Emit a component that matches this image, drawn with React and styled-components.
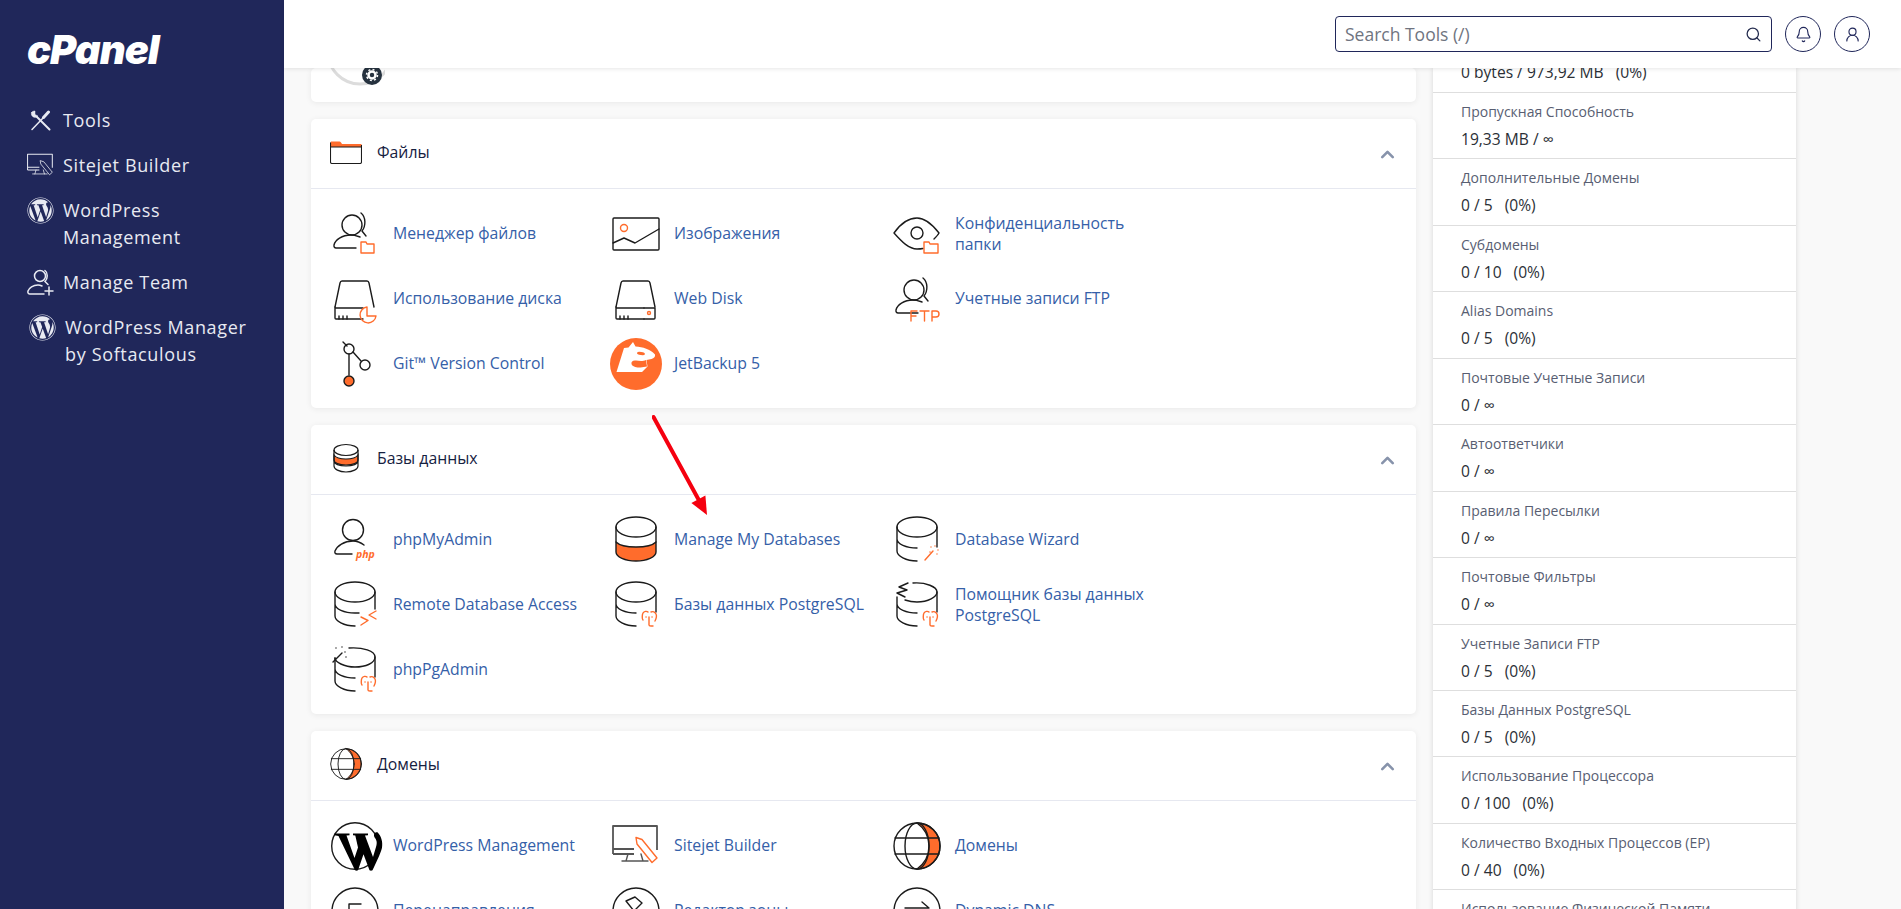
import React from "react";
import styled, { createGlobalStyle } from "styled-components";
import { FaWordpress } from "react-icons/fa";
import { Bell, ChevronUp, Search, UserRound } from "lucide-react";

const ORANGE = "#ff6c2c";
const INK = "#1b1b1b";

const GlobalStyle = createGlobalStyle`
  html, body {
    margin: 0;
    height: 100%;
    overflow: hidden;
    font-family: "Open Sans", "Liberation Sans", sans-serif;
    background: #f9f9f9;
  }
  * { box-sizing: border-box; }
`;

function Svg({ size = 48, children }) {
    return (
        <svg width={size} height={size} viewBox="0 0 48 48" fill="none" stroke={INK} strokeWidth="1.4" strokeLinecap="round" strokeLinejoin="round" style={{ overflow: "visible", flexShrink: 0 }}>
            {children}
        </svg>
    );
}

function Person() {
    return (
        <>
            <circle cx="21" cy="15" r="10" />
            <path d="M30 3c5 4 5 13 1 18l4 5" />
            <path d="M29 27c-3-1-5-2-9-2-9 0-16 5-17 10-.3 2 .7 3 2 3h20" />
        </>
    );
}

function FileManagerIcon() {
    return (
        <Svg>
            <Person />
            <path d="M30 43V32h5l1 2h7v9z" stroke={ORANGE} />
        </Svg>
    );
}

function ImagesIcon() {
    return (
        <Svg>
            <rect x="1" y="8" width="46" height="32" rx="1" />
            <circle cx="12" cy="18" r="3.5" stroke={ORANGE} />
            <path d="M1 33l11-5 11 5 24-14" />
        </Svg>
    );
}

function EyeIcon() {
    return (
        <Svg>
            <path d="M1 23C8 13 16 8 24 8s15 6 22 15c-1 2-3 4-5 6M30 38.500c-2 .4-4 .5-6 .5-8 0-15-7-23-16" />
            <circle cx="24" cy="23" r="6" />
            <path d="M31 43V32h5l1 2h8v9z" stroke={ORANGE} />
        </Svg>
    );
}

function DiskShape() {
    return (
        <>
            <path d="M4 32 9 8c.3-1.300 1-2 2-2h25c1 0 1.700.7 2 2l5 24" />
            <path d="M4 32v11c0 .5.500 1 1 1h27M4 33h28" />
            <path d="M8 44v-3M12 44v-3M16 44v-3" />
        </>
    );
}

function DiskUsageIcon() {
    return (
        <Svg>
            <DiskShape />
            <path d="M36 32a8 8 0 1 0 9 9h-9z" stroke={ORANGE} />
        </Svg>
    );
}

function WebDiskIcon() {
    return (
        <Svg>
            <DiskShape />
            <path d="M32 33h11v10c0 .5-.5 1-1 1H32" />
            <circle cx="37" cy="38" r="1.500" stroke={ORANGE} />
        </Svg>
    );
}

function FtpIcon() {
    return (
        <Svg>
            <Person />
            <path d="M18 46V36h6M18 41h5M27 36h9M31.500 36v10M39 46V36h4a3 3 0 0 1 0 6h-4" stroke={ORANGE} />
        </Svg>
    );
}

function GitIcon() {
    return (
        <Svg>
            <path d="M12 2l4 4" />
            <circle cx="18" cy="9" r="5" />
            <circle cx="34" cy="25" r="5" />
            <path d="M18 14v21M22 12l8 9" />
            <circle cx="18" cy="41" r="5" fill={ORANGE} />
        </Svg>
    );
}

function JetBackupIcon() {
    return (
        <Svg>
            <circle cx="24" cy="24" r="26" fill={ORANGE} stroke="none" />
            <path d="M4.500 32 12 8l4.500-.5L21 2l2.500 4.500C31 7 38 9 43 14.500c.5 2-1 4-3.500 4.500l-5 1 1 6.500-5.500 5.500z" fill="#fff" stroke="none" />
            <ellipse cx="29" cy="13.500" rx="4" ry="1.600" fill={ORANGE} stroke="none" transform="rotate(8 29 13.500)" />
            <path d="M34 20c-3 1.500-7 1-10 .5-3-.5-5 1-4.500 3.500.6 2.500 5 4 9 3.500l6.500-1z" fill={ORANGE} stroke="none" />
        </Svg>
    );
}

function DbShape() {
    return (
        <>
            <ellipse cx="24" cy="11" rx="20" ry="10" />
            <path d="M4 11v12c0 5 9 9 20 9M44 11v20M4 23v12c0 5 9 10 20 10" />
        </>
    );
}

function PgMark() {
    return (
        <path d="M31 39c-1-1-1-5 0-7s4-2 5-1M39 31c2-1 4 0 5 2s0 5-1 7M37 36v8c0 1 1 1 2 1h2M34 36h.1M40 36h.1" stroke={ORANGE} />
    );
}

function PhpMyAdminIcon() {
    return (
        <Svg>
            <circle cx="22" cy="14" r="10.500" />
            <path d="M33 29c-4-3-7-4-11-4-9 0-16 5-18 10-.6 2 .4 3 2 3h15" />
            <text x="25" y="42" fill={ORANGE} stroke="none" fontSize="10.500" fontWeight="700" fontStyle="italic" fontFamily="Open Sans">php</text>
        </Svg>
    );
}

function ManageDbIcon() {
    return (
        <Svg>
            <path d="M4 26v10c0 5 9 9 20 9s20-4 20-9V26c-4 4-12 5-20 5S8 30 4 26z" fill={ORANGE} />
            <ellipse cx="24" cy="11" rx="20" ry="10" />
            <path d="M4 11v15M44 11v15" />
        </Svg>
    );
}

function WizardDbIcon() {
    return (
        <Svg>
            <DbShape />
            <path d="M32 44l8-9M42 30v.1M38 31v.1M45 34v.1M44 38v.1M37 36v.1" stroke={ORANGE} />
        </Svg>
    );
}

function RemoteDbIcon() {
    return (
        <Svg>
            <path d="M4 11v12c0 5 9 9 20 9h4M44 11v17M4 23v12c0 5 9 10 20 10" />
            <ellipse cx="24" cy="11" rx="20" ry="10" />
            <path d="M30 36l7 3.500-7 4.500M45 30l-7 4 7 4" stroke={ORANGE} />
        </Svg>
    );
}

function PgDbIcon() {
    return (
        <Svg>
            <DbShape />
            <PgMark />
        </Svg>
    );
}

function PgAssistantIcon() {
    return (
        <Svg>
            <path d="M15 2l-9 4 8 3-10 3 8 4M20 2c13-1 24 4 24 9s-9 10-20 10c-6 0-9-1-12-2" />
            <path d="M4 16v7c0 5 9 9 20 9M44 11v20M4 23v12c0 5 9 10 20 10" />
            <PgMark />
        </Svg>
    );
}

function PgAdminIcon() {
    return (
        <Svg>
            <path d="M18 2c14-1 26 3 26 9s-9 10-20 10S4 16 4 12" />
            <path d="M4 12v11c0 5 9 9 20 9M44 11v20M4 23v12c0 5 9 10 20 10" />
            <path d="M2 16l9-9M5 2v.1M11 1v.1M14 6v.1M15 11v.1" />
            <PgMark />
        </Svg>
    );
}

function GlobeIcon({ size }) {
    return (
        <Svg size={size}>
            <path d="M24 1c13 0 23 10 23 23S37 47 24 47c7-5 12-13 12-23S31 6 24 1z" fill={ORANGE} />
            <circle cx="24" cy="24" r="23" />
            <ellipse cx="24" cy="24" rx="12" ry="23" />
            <path d="M2 16h44M2 32h44" />
        </Svg>
    );
}

function WordPressMark() {
    return (
        <Svg>
            <circle cx="24" cy="24" r="23.300" />
            <path d="M3.500 11.500h15v1.700l-3 .4 8 22.400 3.500-10.500-2.700-11.900-2.300-.4v-1.700h15v1.700l-3 .4 8 21.500 3-10c1.500-4.500.5-7-1-9-1-1.500-1.500-3-.5-4.500.6-1 1.800-1.500 3-1.300 3.500 3.500 5.500 9 4.500 15.500-1 4.500-4 11-9.500 22.500-1 .5-2 .5-3 0l-6-16-5.500 16c-1 .5-2 .5-3 0L7.500 14l-4-.8z" fill="#000" stroke="none" />
        </Svg>
    );
}

function SitejetIcon({ size, accent = ORANGE, line = "#555" }) {
    return (
        <Svg size={size}>
            <path d="M1 32V4h44v24M1 32h21M1 27h21" stroke={line} strokeWidth="1.800" strokeLinecap="butt" />
            <path d="M16 32l-2 7M29 32l2 7M10 39h26" stroke={line} />
            <path d="M24 15.500l6 2L45 36l-5 4.500L25 22z" stroke={accent} />
        </Svg>
    );
}

function RedirectIcon() {
    return (
        <Svg>
            <circle cx="24" cy="24" r="23" />
            <path d="M18 22V17h12" />
        </Svg>
    );
}

function ZoneIcon() {
    return (
        <Svg>
            <circle cx="24" cy="24" r="23" />
            <path d="M14 14l9-4 7 6-8 8z" />
        </Svg>
    );
}

function DnsIcon() {
    return (
        <Svg>
            <circle cx="24" cy="24" r="23" />
            <path d="M12 21h24l-7-6" />
        </Svg>
    );
}

function FolderIcon() {
    return (
        <svg width="32" height="23" viewBox="0 0 32 23" fill="none" stroke={INK} strokeWidth="1.100">
            <path d="M.5 6V1.500c0-.5.500-1 1-1h8c.5 0 1 .3 1.500 1L12 3h19.500v3z" fill={ORANGE} stroke="none" />
            <path d="M.5 1.500V21c0 1 .5 1.500 1.500 1.500h28c1 0 1.500-.5 1.500-1.500V4M.5 6h31" />
        </svg>
    );
}

function StackIcon() {
    return (
        <svg width="32" height="32" viewBox="0 0 32 32" fill="none" stroke={INK} strokeWidth="1.200">
            <path d="M4 13v5c0 3 5 5 12 5s12-2 12-5v-5c-2 3-6 4-12 4S6 16 4 13z" fill={ORANGE} />
            <ellipse cx="16" cy="8" rx="12" ry="5.500" />
            <path d="M4 8v16c0 3 5 6 12 6s12-3 12-6V8M4 19c0 3 5 5 12 5s12-2 12-5" />
        </svg>
    );
}

function GaugeIcon() {
    return (
        <svg width="60" height="60" viewBox="0 0 60 60" fill="none">
            <circle cx="35" cy="26" r="32" stroke="#dcdcdc" strokeWidth="3" />
            <circle cx="47" cy="49" r="10" fill="#26323f" />
            <circle cx="47" cy="49" r="3.500" stroke="#fff" strokeWidth="2.500" />
            <circle cx="47" cy="49" r="5.500" stroke="#fff" strokeWidth="1.500" strokeDasharray="2 2.300" />
        </svg>
    );
}

function ToolsIcon() {
    return (
        <svg width="21" height="21" viewBox="0 0 21 21" fill="none" stroke="#e8eaf2" strokeWidth="1.500" strokeLinecap="round">
            <path d="M2 19.500L13 8" />
            <path d="M13.500 7.500L18.500 2" strokeWidth="3" />
            <path d="M7 7l12.500 12.500" strokeWidth="2" />
            <path d="M1.500 2.500c-1 3 2 6 5.500 4.500L8 6 5 4.500 5 1C3.500 1 2 1.500 1.500 2.500z" fill="#e8eaf2" strokeWidth="0.500" />
        </svg>
    );
}

function TeamIcon() {
    return (
        <svg width="27" height="27" viewBox="0 0 27 27" fill="none" stroke="#e8eaf2" strokeWidth="1.500" strokeLinecap="round">
            <circle cx="13" cy="7" r="5.500" />
            <path d="M18 1.500c3 2 3 8 0 11l3 3M15 17c-1-.5-2-1-4-1-5 0-9 3-10 6-.3 1.500 0 3 1.500 3H17M22 18v8M18 22h8" />
        </svg>
    );
}

const sideItems = [
    { icon: <ToolsIcon />, label: "Tools" },
    { icon: <SitejetIcon size={27} accent="#e8eaf2" line="#e8eaf2" />, label: "Sitejet Builder" },
    { icon: <FaWordpress size={27} />, label: "WordPress Management" },
    { icon: <TeamIcon />, label: "Manage Team" },
    { icon: <FaWordpress size={27} />, label: "WordPress Manager by Softaculous", shifted: true },
];

const sections = [
    {
        title: "Файлы",
        icon: <FolderIcon />,
        items: [
            [<FileManagerIcon />, "Менеджер файлов"],
            [<ImagesIcon />, "Изображения"],
            [<EyeIcon />, "Конфиденциальность папки"],
            [<DiskUsageIcon />, "Использование диска"],
            [<WebDiskIcon />, "Web Disk"],
            [<FtpIcon />, "Учетные записи FTP"],
            [<GitIcon />, "Git™ Version Control"],
            [<JetBackupIcon />, "JetBackup 5"],
        ],
    },
    {
        title: "Базы данных",
        icon: <StackIcon />,
        items: [
            [<PhpMyAdminIcon />, "phpMyAdmin"],
            [<ManageDbIcon />, "Manage My Databases"],
            [<WizardDbIcon />, "Database Wizard"],
            [<RemoteDbIcon />, "Remote Database Access"],
            [<PgDbIcon />, "Базы данных PostgreSQL"],
            [<PgAssistantIcon />, "Помощник базы данных PostgreSQL"],
            [<PgAdminIcon />, "phpPgAdmin"],
        ],
    },
    {
        title: "Домены",
        icon: <GlobeIcon size={32} />,
        items: [
            [<WordPressMark />, "WordPress Management"],
            [<SitejetIcon />, "Sitejet Builder"],
            [<GlobeIcon />, "Домены"],
            [<RedirectIcon />, "Перенаправления"],
            [<ZoneIcon />, "Редактор зоны"],
            [<DnsIcon />, "Dynamic DNS"],
        ],
    },
];

const stats = [
    ["Пропускная Способность", "19,33 MB / ∞"],
    ["Дополнительные Домены", "0 / 5", "(0%)"],
    ["Субдомены", "0 / 10", "(0%)"],
    ["Alias Domains", "0 / 5", "(0%)"],
    ["Почтовые Учетные Записи", "0 / ∞"],
    ["Автоответчики", "0 / ∞"],
    ["Правила Пересылки", "0 / ∞"],
    ["Почтовые Фильтры", "0 / ∞"],
    ["Учетные Записи FTP", "0 / 5", "(0%)"],
    ["Базы Данных PostgreSQL", "0 / 5", "(0%)"],
    ["Использование Процессора", "0 / 100", "(0%)"],
    ["Количество Входных Процессов (EP)", "0 / 40", "(0%)"],
    ["Использование Физической Памяти", "0 / 1 GB", "(0%)"],
];

export default function App() {
    return (
        <Page>
            <GlobalStyle />
            <Sidebar>
                <Logo>cPanel</Logo>
                <SideList>
                    {sideItems.map((item) => (
                        <SideItem key={item.label} $shifted={item.shifted}>
                            <SideIcon>{item.icon}</SideIcon>
                            <span>{item.label}</span>
                        </SideItem>
                    ))}
                </SideList>
            </Sidebar>
            <Main>
                <Topbar>
                    <SearchBox>
                        <SearchText>Search Tools (/)</SearchText>
                        <Search size={17} color="#222a4d" strokeWidth={1.8} />
                    </SearchBox>
                    <RoundButton><Bell size={17} strokeWidth={1.6} /></RoundButton>
                    <RoundButton><UserRound size={17} strokeWidth={1.6} /></RoundButton>
                </Topbar>
                <Content>
                    <Column>
                        <StubCard><GaugeIcon /></StubCard>
                        {sections.map((section) => (
                            <Card key={section.title}>
                                <CardHead>
                                    <HeadIcon>{section.icon}</HeadIcon>
                                    <CardTitle>{section.title}</CardTitle>
                                    <Chevron><ChevronUp size={21} strokeWidth={3} /></Chevron>
                                </CardHead>
                                <ToolGrid>
                                    {section.items.map(([icon, label]) => (
                                        <Tool key={label}>
                                            <ToolIcon>{icon}</ToolIcon>
                                            <ToolLabel>{label}</ToolLabel>
                                        </Tool>
                                    ))}
                                </ToolGrid>
                            </Card>
                        ))}
                    </Column>
                    <StatsPanel>
                        <StatStub>
                            <StatValue>0 bytes / 973,92 MB<Percent>(0%)</Percent></StatValue>
                        </StatStub>
                        {stats.map(([label, value, percent]) => (
                            <StatRow key={label}>
                                <StatLabel>{label}</StatLabel>
                                <StatValue>{value}{percent && <Percent>{percent}</Percent>}</StatValue>
                            </StatRow>
                        ))}
                    </StatsPanel>
                </Content>
            </Main>
            <Annotation width="70" height="110" viewBox="0 0 70 110">
                <path d="M1.500 2L46.400 84.200" stroke="#f5000f" strokeWidth="4" strokeLinecap="round" />
                <path d="M55 100L39.400 88L53.400 80.400z" fill="#f5000f" />
            </Annotation>
        </Page>
    );
}

const Page = styled.div`
  display: flex;
  height: 909px;
  overflow: hidden;
  position: relative;
`;

const Sidebar = styled.aside`
  width: 284px;
  flex-shrink: 0;
  background: #20275a;
  padding: 29px 27px 0;
  color: #e8eaf2;
`;

const Logo = styled.div`
  font-family: "Inter", "Open Sans", sans-serif;
  font-weight: 900;
  font-style: italic;
  font-size: 40px;
  line-height: 42px;
  letter-spacing: -1px;
  color: #fff;
`;

const SideList = styled.div`
  display: flex;
  flex-direction: column;
  gap: 18px;
  margin-top: 36px;
`;

const SideItem = styled.div`
  display: flex;
  gap: 9px;
  font-size: 18px;
  line-height: 27px;
  letter-spacing: 0.65px;
  padding-left: ${(props) => (props.$shifted ? "2px" : "0")};
`;

const SideIcon = styled.div`
  width: 27px;
  height: 27px;
  flex-shrink: 0;
  display: flex;
  align-items: center;
  justify-content: center;
`;

const Main = styled.div`
  flex: 1;
  min-width: 0;
  display: flex;
  flex-direction: column;
`;

const Topbar = styled.header`
  height: 68px;
  flex-shrink: 0;
  background: #fff;
  box-shadow: 0 1px 4px rgba(0, 0, 0, 0.1);
  display: flex;
  align-items: center;
  justify-content: flex-end;
  gap: 13px;
  padding-right: 31px;
  position: relative;
  z-index: 2;
`;

const SearchBox = styled.div`
  width: 437px;
  height: 36px;
  border: 1px solid #20275a;
  border-radius: 4px;
  display: flex;
  align-items: center;
  justify-content: space-between;
  padding: 0 9px;
`;

const SearchText = styled.span`
  font-size: 17.500px;
  color: #6f7480;
`;

const RoundButton = styled.div`
  width: 36px;
  height: 36px;
  border: 1px solid #20275a;
  border-radius: 50%;
  display: flex;
  align-items: center;
  justify-content: center;
  color: #20275a;
`;

const Content = styled.div`
  flex: 1;
  min-height: 0;
  overflow: hidden;
  display: flex;
  align-items: flex-start;
  gap: 17px;
  padding-left: 27px;
`;

const Column = styled.div`
  width: 1105px;
  flex-shrink: 0;
  display: flex;
  flex-direction: column;
  gap: 17px;
`;

const Card = styled.section`
  background: #fff;
  border-radius: 5px;
  box-shadow: 0 1px 6px rgba(0, 0, 0, 0.07);
`;

const StubCard = styled(Card)`
  height: 34px;
  display: flex;
  align-items: flex-end;
  padding: 0 0 16px 14px;
`;

const CardHead = styled.div`
  height: 70px;
  display: flex;
  align-items: center;
  padding: 0 18px 3px 19px;
  border-bottom: 1px solid #e6e8f0;
`;

const HeadIcon = styled.div`
  width: 32px;
  height: 32px;
  display: flex;
  align-items: center;
  justify-content: center;
`;

const CardTitle = styled.h2`
  margin: 0 0 0 15px;
  font-size: 15.800px;
  font-weight: 400;
  color: #16213f;
`;

const Chevron = styled.div`
  margin: 4px 0 0 auto;
  display: flex;
  color: #8793ab;
`;

const ToolGrid = styled.div`
  display: grid;
  grid-template-columns: repeat(3, 281px);
  grid-auto-rows: 65px;
  padding: 12px 20px;
`;

const Tool = styled.a`
  display: flex;
  align-items: center;
  gap: 14px;
`;

const ToolIcon = styled.div`
  width: 48px;
  height: 48px;
  flex-shrink: 0;
  display: flex;
  align-items: center;
  justify-content: center;
`;

const ToolLabel = styled.span`
  max-width: 205px;
  font-size: 15.800px;
  line-height: 21px;
  color: #3560a8;
`;

const StatsPanel = styled.aside`
  width: 363px;
  flex-shrink: 0;
  background: #fff;
  box-shadow: 0 0 5px rgba(0, 0, 0, 0.14);
`;

const StatStub = styled.div`
  height: 25px;
  display: flex;
  align-items: flex-end;
  padding: 0 28px 10px;
  border-bottom: 1px solid #dedede;
`;

const StatRow = styled.div`
  height: 66.450px;
  padding: 9px 28px 0;
  border-bottom: 1px solid #dedede;
`;

const StatLabel = styled.div`
  font-size: 14px;
  line-height: 20px;
  color: #585e72;
`;

const StatValue = styled.div`
  margin-top: 7px;
  font-size: 15.600px;
  line-height: 20px;
  color: #2b2f36;
  white-space: nowrap;
`;

const Percent = styled.span`
  margin-left: 12px;
`;

const Annotation = styled.svg`
  position: absolute;
  left: 652px;
  top: 415px;
  z-index: 3;
`;
